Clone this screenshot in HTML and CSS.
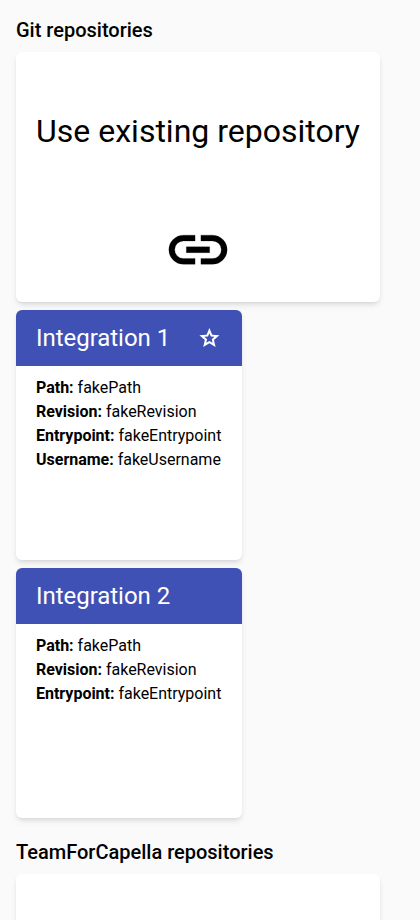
FILE: index.html
```html
<!DOCTYPE html>
<html lang="en">
<head>
<meta charset="utf-8">
<title>Repositories</title>
<link rel="stylesheet" href="styles.css">
</head>
<body>
<main>
  <section>
    <h2>Git repositories</h2>
    <div class="cards">
      <a class="card action">
        <span class="action-title">Use existing repository</span>
        <svg class="link-icon" viewBox="0 0 24 24"><path d="M11 17H7q-2.075 0-3.537-1.463T2 12q0-2.075 1.463-3.537T7 7h4v2H7q-1.25 0-2.125.875T4 12q0 1.25.875 2.125T7 15h4v2Zm-3-4v-2h8v2H8Zm5 4v-2h4q1.25 0 2.125-.875T20 12q0-1.25-.875-2.125T17 9h-4V7h4q2.075 0 3.538 1.463T22 12q0 2.075-1.463 3.538T17 17h-4Z"/></svg>
      </a>
      <article class="card">
        <header>Integration 1
          <svg class="star" viewBox="0 0 24 24"><path d="m8.85 16.825 3.15-1.9 3.15 1.925-.825-3.6 2.775-2.4-3.65-.325-1.45-3.4-1.45 3.375-3.65.325 2.775 2.425-.825 3.575ZM5.825 21l1.625-7.025L2 9.25l7.2-.625L12 2l2.8 6.625 7.2.625-5.45 4.725L18.175 21 12 17.275 5.825 21Z"/></svg>
        </header>
        <div class="details">
          <div><b>Path:</b> fakePath</div>
          <div><b>Revision:</b> fakeRevision</div>
          <div><b>Entrypoint:</b> fakeEntrypoint</div>
          <div><b>Username:</b> fakeUsername</div>
        </div>
      </article>
      <article class="card">
        <header>Integration 2</header>
        <div class="details">
          <div><b>Path:</b> fakePath</div>
          <div><b>Revision:</b> fakeRevision</div>
          <div><b>Entrypoint:</b> fakeEntrypoint</div>
        </div>
      </article>
    </div>
  </section>
  <section class="next">
    <h2>TeamForCapella repositories</h2>
    <div class="card action"></div>
  </section>
</main>
</body>
</html>
```

FILE: styles.css
```css
* { box-sizing: border-box; }
body {
  margin: 0;
  background: #fafafa;
  color: #000;
  font: 16px/24px Roboto, sans-serif;
  -webkit-font-smoothing: antialiased;
}
main {
  display: flex;
  flex-direction: column;
  height: 920px;
  padding: 14px 16px 0;
  overflow: hidden;
}
h2 {
  margin: 0 0 6px;
  font-size: 20px;
  line-height: 32px;
  font-weight: 500;
}
.cards {
  display: flex;
  flex-direction: column;
  align-items: flex-start;
  gap: 8px;
  margin-bottom: 18px;
}
.card {
  height: 250px;
  overflow: hidden;
  border-radius: 6px;
  background: #fff;
  box-shadow: 0 4px 6px -1px rgba(0, 0, 0, .1), 0 2px 4px -2px rgba(0, 0, 0, .1);
}
.action {
  display: flex;
  flex-direction: column;
  align-items: center;
  width: 364px;
  padding-top: 55px;
}
.next .card {
  height: 46px;
  border-radius: 6px 6px 0 0;
}
.action-title {
  font-size: 32px;
  line-height: 48px;
  white-space: nowrap;
}
.link-icon { width: 70px; height: 70px; margin-top: 60px; margin-right: 1px; stroke: #000; stroke-width: .08; }
.link-icon path { transform: translateY(-.1px); }
header {
  display: flex;
  align-items: center;
  justify-content: space-between;
  height: 56px;
  padding: 0 20px;
  background: #3f51b5;
  color: #fff;
  font-size: 24px;
  letter-spacing: -.04px;
}
.star { width: 24px; height: 24px; margin-right: 1px; fill: #fff; }
.star path { transform: translateX(.4px); }
.details { width: 226px; padding: 10px 20px; white-space: nowrap; letter-spacing: -.01px; }
```
